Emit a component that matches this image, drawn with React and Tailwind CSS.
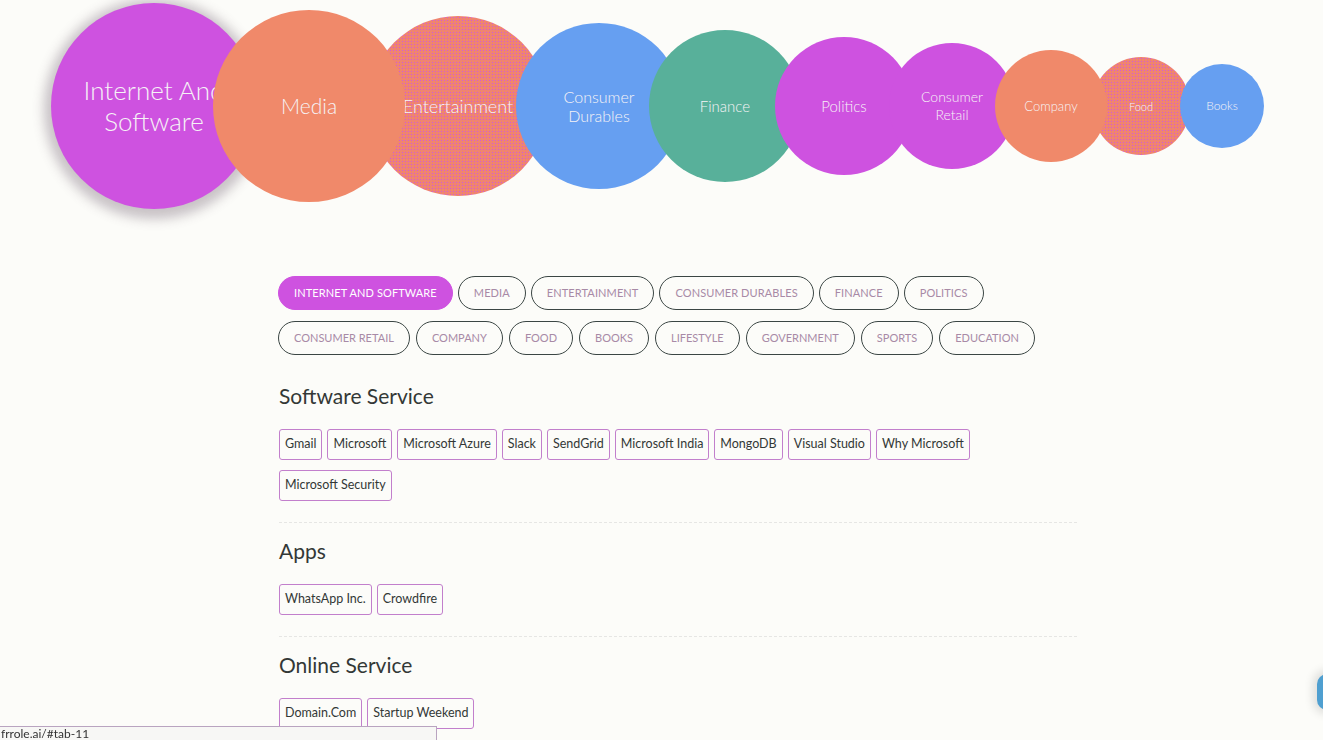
import React from "react";

const bubbles = [
  { label: ["Internet And", "Software"], size: "w-[206px] h-[206px]", ml: "", z: "z-10", bg: "bg-[#ce52e0] shadow-[0_3px_12px_7px_rgba(90,70,90,0.32)]", text: "text-[26px] leading-[31px]" },
  { label: ["Media"], size: "w-[192px] h-[192px]", ml: "-ml-[44px]", z: "z-20", bg: "bg-[#f0896a]", text: "text-[21px] leading-[24px]" },
  { label: ["Entertainment"], size: "w-[180px] h-[180px]", ml: "-ml-[37px]", z: "z-[15]", bg: "bg-[#ef8470] bg-[radial-gradient(circle,#d25ad6_0.6px,transparent_1px)] bg-[length:3px_3px]", text: "text-[18px] leading-[22px]" },
  { label: ["Consumer", "Durables"], size: "w-[166px] h-[166px]", ml: "-ml-[32px]", z: "z-30", bg: "bg-[#669ff1]", text: "text-[16px] leading-[19px]" },
  { label: ["Finance"], size: "w-[152px] h-[152px]", ml: "-ml-[33px]", z: "z-40", bg: "bg-[#58b09a]", text: "text-[15px] leading-[18px]" },
  { label: ["Politics"], size: "w-[138px] h-[138px]", ml: "-ml-[26px]", z: "z-50", bg: "bg-[#ce52e0]", text: "text-[15px] leading-[18px]" },
  { label: ["Consumer", "Retail"], size: "w-[126px] h-[126px]", ml: "-ml-[24px]", z: "z-[55]", bg: "bg-[#ce52e0]", text: "text-[14px] leading-[18px]" },
  { label: ["Company"], size: "w-[112px] h-[112px]", ml: "-ml-[20px]", z: "z-[60]", bg: "bg-[#f0896a]", text: "text-[13px] leading-[15px]" },
  { label: ["Food"], size: "w-[98px] h-[98px]", ml: "-ml-[15px]", z: "z-[58]", bg: "bg-[#ef8470] bg-[radial-gradient(circle,#d25ad6_0.6px,transparent_1px)] bg-[length:3px_3px]", text: "text-[11px] leading-[13px]" },
  { label: ["Books"], size: "w-[84px] h-[84px]", ml: "-ml-[10px]", z: "z-[70]", bg: "bg-[#669ff1]", text: "text-[12px] leading-[14px]" },
];

const tabsRow1 = ["INTERNET AND SOFTWARE", "MEDIA", "ENTERTAINMENT", "CONSUMER DURABLES", "FINANCE", "POLITICS"];
const tabsRow2 = ["CONSUMER RETAIL", "COMPANY", "FOOD", "BOOKS", "LIFESTYLE", "GOVERNMENT", "SPORTS", "EDUCATION"];

const sections = [
  { title: "Software Service", tags: ["Gmail", "Microsoft", "Microsoft Azure", "Slack", "SendGrid", "Microsoft India", "MongoDB", "Visual Studio", "Why Microsoft", "Microsoft Security"] },
  { title: "Apps", tags: ["WhatsApp Inc.", "Crowdfire"] },
  { title: "Online Service", tags: ["Domain.Com", "Startup Weekend"] },
];

function Pill({ label, active, wide }) {
  return (
    <div
      className={
        "h-[34px] px-[15px] rounded-full flex items-center text-[11px] " +
        (wide ? "tracking-[0.1px] " : "") +
        (active ? "bg-[#ce52e0] text-white border border-[#ce52e0]" : "border border-[#3b4644] text-[#a88aa6]")
      }
    >
      {label}
    </div>
  );
}

export default function App() {
  return (
    <div className="relative min-h-[740px] w-full overflow-hidden bg-[#fcfcf9]" style={{ fontFamily: "Lato, 'Noto Sans', sans-serif" }}>
      {/* bubbles */}
      <div className="flex items-center h-[212px] pl-[51px]">
        {bubbles.map((b, i) => (
          <div
            key={i}
            className={"relative shrink-0 rounded-full flex flex-col items-center justify-center text-center text-[#f6f3f6] font-light " + b.size + " " + b.ml + " " + b.z + " " + b.bg}
          >
            {b.label.map((l, j) => (
              <span key={j} className={"whitespace-nowrap " + b.text}>{l}</span>
            ))}
          </div>
        ))}
      </div>

      {/* content */}
      <div className="ml-[278px] w-[799px] mt-[64px]">
        <div className="flex flex-col gap-[11px]">
          <div className="flex gap-[5px]">
            {tabsRow1.map((t, i) => (
              <Pill key={t} label={t} active={i === 0} wide />
            ))}
          </div>
          <div className="flex gap-[6px]">
            {tabsRow2.map((t) => (
              <Pill key={t} label={t} />
            ))}
          </div>
        </div>

        <div className="mt-[28px] pl-[1px]">
          {sections.map((s, i) => (
            <div key={s.title} className={i > 0 ? "border-t border-dashed border-[#e6e6e4] pt-[15px]" : ""}>
              <h2 className="text-[21px] leading-[26px] text-[#333836] font-normal">{s.title}</h2>
              <div className="flex flex-wrap gap-x-[5px] gap-y-[10px] mt-[20px] pb-[21px]">
                {s.tags.map((t) => (
                  <div key={t} className="h-[31px] px-[5px] flex items-center rounded-[3px] border border-[#c27fcc] text-[12.5px] text-[#333836]">
                    {t}
                  </div>
                ))}
              </div>
            </div>
          ))}
        </div>
      </div>

      {/* status bar */}
      <div className="fixed left-0 bottom-0 z-[100] w-[437px] h-[14px] bg-[#f7f7f5] border-t border-r border-[#b9a4c0] text-[12px] leading-[13px] text-[#333] pl-[1px]" style={{ fontFamily: "Lato, 'Liberation Sans', sans-serif" }}>
        frrole.ai/#tab-11
      </div>

      {/* chat widget edge */}
      <div className="fixed right-[-14px] top-[674px] z-[100] w-[20px] h-[36px] rounded-full bg-[#4f9fd0] shadow-[0_0_10px_4px_rgba(0,0,0,0.12)]"></div>
    </div>
  );
}
